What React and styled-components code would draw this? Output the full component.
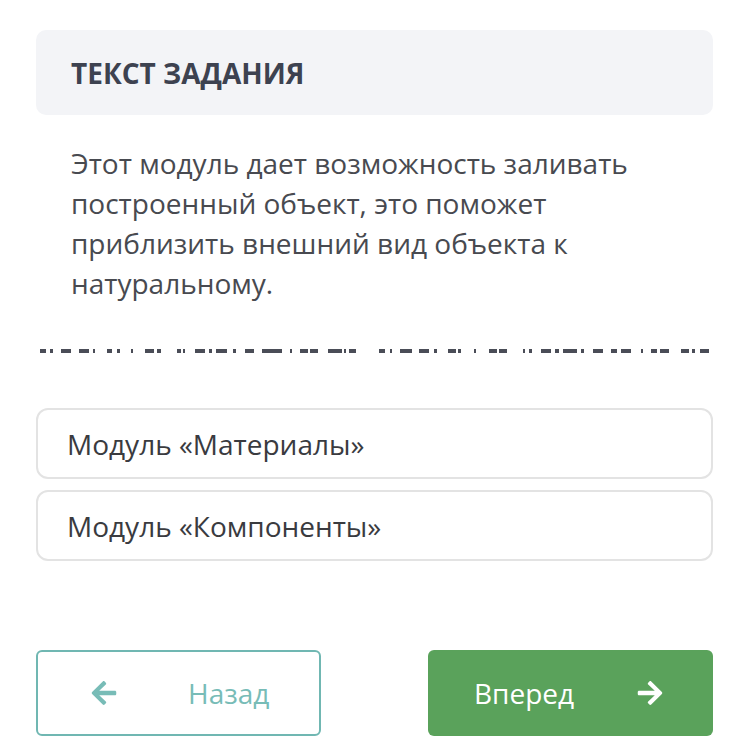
import React from "react";
import styled, { createGlobalStyle } from "styled-components";
import { FaArrowLeft, FaArrowRight } from "react-icons/fa";

const GlobalStyle = createGlobalStyle`
  body {
    margin: 0;
    background: #ffffff;
    font-family: "Open Sans", "Noto Sans", sans-serif;
  }
`;

// hidden answer line: dashes left by obscured text
const dashes = [
  [40, 46], [50, 53], [61, 71], [79, 89], [93, 95], [107, 112], [117, 120],
  [131, 133], [145, 154], [157, 161], [177, 181], [183, 185], [195, 205],
  [209, 212], [216, 227], [233, 236], [245, 254], [262, 282], [290, 292],
  [300, 308], [310, 318], [328, 342], [344, 346], [349, 356], [379, 385],
  [390, 392], [400, 412], [419, 429], [434, 437], [448, 456], [458, 461],
  [474, 476], [489, 497], [499, 507], [523, 525], [529, 532], [541, 551],
  [555, 559], [563, 577], [581, 584], [593, 603], [611, 617], [621, 631],
  [641, 643], [651, 657], [660, 669], [681, 689], [692, 695], [700, 709],
];

const options = ["Модуль «Материалы»", "Модуль «Компоненты»"];

export default function App() {
  return (
    <Page>
      <GlobalStyle />
      <Header>
        <Title>ТЕКСТ ЗАДАНИЯ</Title>
      </Header>
      <Question>
        Этот модуль дает возможность заливать построенный объект, это поможет
        приблизить внешний вид объекта к натуральному.
      </Question>
      <DashLine width="750" height="6" viewBox="0 0 750 6">
        {dashes.map(([a, b]) => (
          <rect key={a} x={a} y="1" width={b - a} height="4" fill="#4a4d57" />
        ))}
      </DashLine>
      <Options>
        {options.map((o) => (
          <Option key={o}>{o}</Option>
        ))}
      </Options>
      <Footer>
        <NavButton $variant="back">
          <FaArrowLeft size={28} />
          <span>Назад</span>
        </NavButton>
        <NavButton $variant="next">
          <span>Вперед</span>
          <FaArrowRight size={28} />
        </NavButton>
      </Footer>
    </Page>
  );
}

const Page = styled.div`
  width: 750px;
  padding-top: 30px;
`;

const Header = styled.div`
  margin: 0 37px 0 36px;
  height: 85px;
  background: #f3f4f7;
  border-radius: 10px;
  display: flex;
  align-items: center;
  padding-left: 35px;
  box-sizing: border-box;
`;

const Title = styled.h2`
  margin: 0;
  font-size: 28px;
  font-weight: 700;
  color: #3d4250;
`;

const Question = styled.p`
  margin: 28px 105px 0 71px;
  font-size: 28px;
  line-height: 40px;
  color: #484a50;
`;

const DashLine = styled.svg`
  display: block;
  margin-top: 45px;
`;

const Options = styled.div`
  margin: 54px 37px 0 36px;
  display: flex;
  flex-direction: column;
  gap: 11px;
`;

const Option = styled.div`
  height: 71px;
  box-sizing: border-box;
  border: 2px solid #e3e3e3;
  border-radius: 12px;
  display: flex;
  align-items: center;
  padding-left: 29px;
  font-size: 28px;
  color: #3a3b3f;
`;

const Footer = styled.div`
  margin: 89px 37px 0 36px;
  display: flex;
  justify-content: space-between;
`;

const NavButton = styled.div`
  width: 285px;
  height: 86px;
  box-sizing: border-box;
  border-radius: 6px;
  display: flex;
  align-items: center;
  font-size: 28px;
  ${({ $variant }) =>
    $variant === "back"
      ? `
    border: 2px solid #70b7b2;
    color: #78bcb7;
    padding-left: 52px;
    gap: 70px;
  `
      : `
    background: #5aa25b;
    color: #ffffff;
    padding-left: 46px;
    gap: 62px;
  `}
`;
